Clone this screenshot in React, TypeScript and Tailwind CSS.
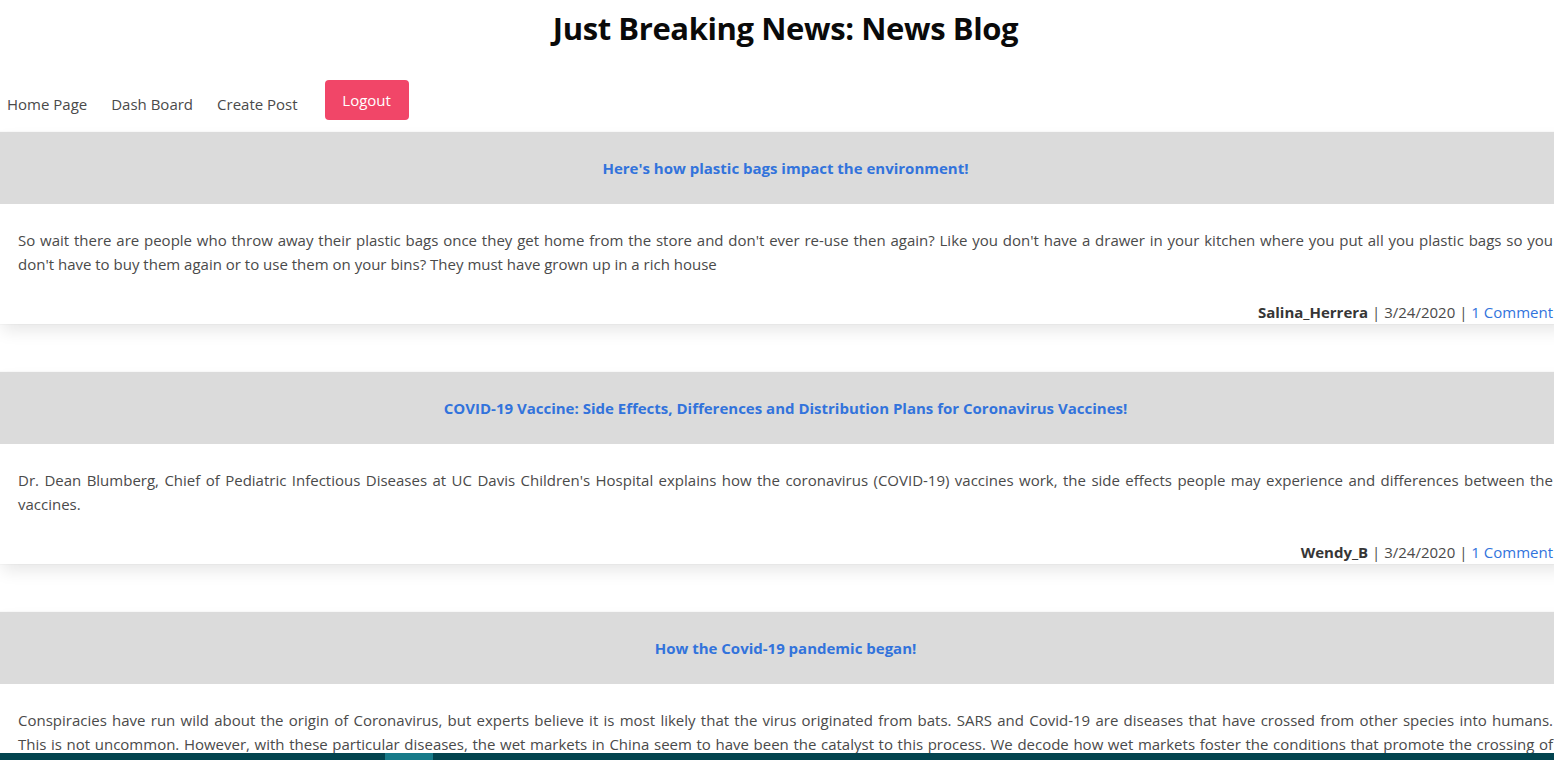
const posts = [
  {
    title: "Here's how plastic bags impact the environment!",
    lead: "",
    body: "So wait there are people who throw away their plastic bags once they get home from the store and don't ever re-use then again? Like you don't have a drawer in your kitchen where you put all you plastic bags so you don't have to buy them again or to use them on your bins? They must have grown up in a rich house",
    author: "Salina_Herrera",
    date: "3/24/2020",
    comments: "1 Comment",
  },
  {
    title: "COVID-19 Vaccine: Side Effects, Differences and Distribution Plans for Coronavirus Vaccines!",
    lead: "",
    body: "Dr. Dean Blumberg, Chief of Pediatric Infectious Diseases at UC Davis Children's Hospital explains how the coronavirus (COVID-19) vaccines work, the side effects people may experience and differences between the vaccines.",
    author: "Wendy_B",
    date: "3/24/2020",
    comments: "1 Comment",
  },
  {
    title: "How the Covid-19 pandemic began!",
    lead: "Conspiracies have run wild about the origin of Coronavirus, but experts believe it is most likely that the virus originated from bats. SARS and Covid-19 are diseases that have crossed from other species into humans.",
    body: "This is not uncommon. However, with these particular diseases, the wet markets in China seem to have been the catalyst to this process. We decode how wet markets foster the conditions that promote the crossing of diseases from animals to humans.",
    author: "Salina_Herrera",
    date: "3/24/2020",
    comments: "1 Comment",
  },
]

function PostCard({ post }: { post: (typeof posts)[number] }) {
  return (
    <div className="bg-white shadow-[0_8px_16px_-2px_rgba(10,10,10,0.1),0_0_0_1px_rgba(10,10,10,0.02)]">
      <div className="bg-[#dbdbdb] h-[72px] flex items-center justify-center">
        <a className="text-[#3273dc] font-bold text-[15px] cursor-pointer">{post.title}</a>
      </div>
      <div className="pt-6">
        <p className="px-[18px] text-justify text-[15px] leading-6 text-[#4a4a4a]">
          {post.lead && <span className="block [text-align-last:justify]">{post.lead}</span>}
          {post.body}
        </p>
        <div className="mt-6 text-right text-[15px] leading-6 pr-[18px] text-[#4a4a4a]">
          <strong className="text-[#363636]">{post.author}</strong> | {post.date} |{" "}
          <a className="text-[#3273dc] cursor-pointer">{post.comments}</a>
        </div>
      </div>
    </div>
  )
}

export default function App() {
  return (
    <div className="min-h-screen bg-white font-['Open_Sans',sans-serif] overflow-hidden">
      <div className="w-[1571px]">
        {/* header */}
        <h1 className="text-center text-[31px] tracking-[-0.4px] font-bold text-[#0a0a0a] pt-[8px] leading-10">
          Just Breaking News: News Blog
        </h1>

        {/* nav */}
        <nav className="flex items-center h-10 mt-8 mb-3 pl-[7px] text-[15px] text-[#4a4a4a]">
          <a className="pt-2 mr-6 cursor-pointer">Home Page</a>
          <a className="pt-2 mr-6 cursor-pointer">Dash Board</a>
          <a className="pt-2 mr-[27px] cursor-pointer">Create Post</a>
          <button className="bg-[#f14668] text-white rounded h-10 w-[84px] text-[15px]">Logout</button>
        </nav>

        <div className="flex flex-col gap-12">
          {posts.map((p, i) => (
            <PostCard key={i} post={p} />
          ))}
        </div>
      </div>

      {/* bottom bar */}
      <div className="fixed bottom-0 left-0 right-0 h-[7px] bg-[#03444f]">
        <div className="ml-[385px] w-12 h-full bg-[#177a89]" />
      </div>
    </div>
  )
}
